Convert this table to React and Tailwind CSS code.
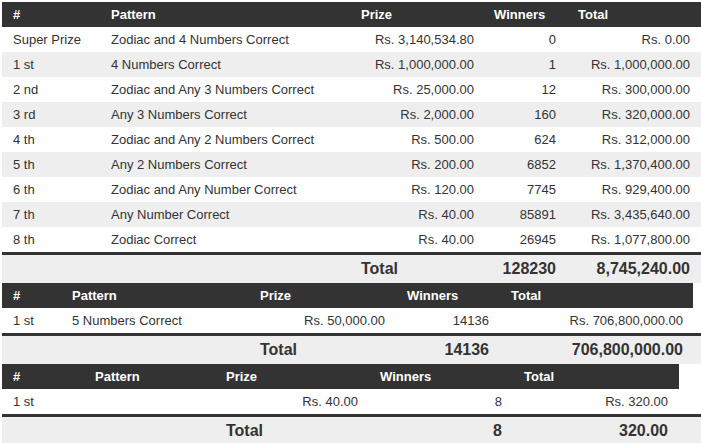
import React from "react";

const main = {
  cols: "grid-cols-[98px_250px_133px_84px_134px]",
  prizePad: "pr-[9px]",
  rows: [
    ["Super Prize", "Zodiac and 4 Numbers Correct", "Rs. 3,140,534.80", "0", "Rs. 0.00"],
    ["1 st", "4 Numbers Correct", "Rs. 1,000,000.00", "1", "Rs. 1,000,000.00"],
    ["2 nd", "Zodiac and Any 3 Numbers Correct", "Rs. 25,000.00", "12", "Rs. 300,000.00"],
    ["3 rd", "Any 3 Numbers Correct", "Rs. 2,000.00", "160", "Rs. 320,000.00"],
    ["4 th", "Zodiac and Any 2 Numbers Correct", "Rs. 500.00", "624", "Rs. 312,000.00"],
    ["5 th", "Any 2 Numbers Correct", "Rs. 200.00", "6852", "Rs. 1,370,400.00"],
    ["6 th", "Zodiac and Any Number Correct", "Rs. 120.00", "7745", "Rs. 929,400.00"],
    ["7 th", "Any Number Correct", "Rs. 40.00", "85891", "Rs. 3,435,640.00"],
    ["8 th", "Zodiac Correct", "Rs. 40.00", "26945", "Rs. 1,077,800.00"],
  ],
  total: ["128230", "8,745,240.00"],
};

const second = {
  cols: "grid-cols-[59px_188px_147px_104px_194px]",
  prizePad: "pr-[11px]",
  width: "w-[691px]",
  rows: [["1 st", "5 Numbers Correct", "Rs. 50,000.00", "14136", "Rs. 706,800,000.00"]],
  total: ["14136", "706,800,000.00"],
};

const third = {
  cols: "grid-cols-[82px_131px_154px_144px_166px]",
  prizePad: "pr-[11px]",
  width: "w-[677px]",
  rows: [["1 st", "", "Rs. 40.00", "8", "Rs. 320.00"]],
  total: ["8", "320.00"],
};

function PrizeTable({ data, width = "w-full" }) {
  return (
    <div>
      <div className={`grid ${data.cols} ${width} h-[25px] items-center bg-[#333] text-white font-bold text-[13px]`}>
        <div className="pl-[11px]">#</div>
        <div className="pl-[11px]">Pattern</div>
        <div className="pl-[11px]">Prize</div>
        <div className="pl-[11px]">Winners</div>
        <div className="pl-[11px]">Total</div>
      </div>
      {data.rows.map((r, i) => (
        <div
          key={i}
          className={`grid ${data.cols} ${width} h-[25px] items-center text-[13px] text-[#333] ${i % 2 ? "bg-[#eee]" : "bg-white"}`}
        >
          <div className="pl-[11px]">{r[0]}</div>
          <div className="pl-[11px] whitespace-nowrap">{r[1]}</div>
          <div className={`${data.prizePad} text-right`}>{r[2]}</div>
          <div className="pr-[11px] text-right">{r[3]}</div>
          <div className="pr-[11px] text-right">{r[4]}</div>
        </div>
      ))}
      <div className={`grid ${data.cols} w-full h-[31px] border-t-[3px] border-[#333] bg-[#eee] items-center text-[16px] font-bold text-[#333]`}>
        <div />
        <div />
        <div className="pl-[11px]">Total</div>
        <div className="pr-[11px] text-right">{data.total[0]}</div>
        <div className="pr-[11px] text-right">{data.total[1]}</div>
      </div>
    </div>
  );
}

export default function App() {
  return (
    <div className="w-[701px] h-[443px] overflow-hidden bg-white pl-[2px] pt-[2px] font-['Liberation_Sans',Arial,sans-serif]">
      <PrizeTable data={main} />
      <PrizeTable data={second} width={second.width} />
      <PrizeTable data={third} width={third.width} />
    </div>
  );
}
